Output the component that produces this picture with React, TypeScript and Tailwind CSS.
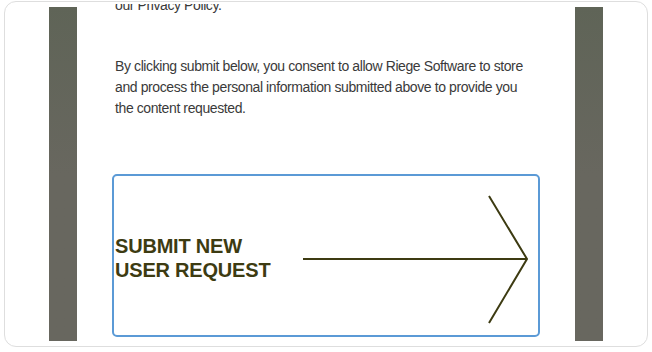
import React from "react";

function ArrowIcon() {
  return (
    <svg width="226" height="130" viewBox="0 0 226 130" className="shrink-0 mt-[5px]">
      <line x1="0" y1="64" x2="224" y2="64" stroke="#3d3b12" strokeWidth="2" />
      <polyline points="186,1 224,64 186,128" fill="none" stroke="#3d3b12" strokeWidth="2" />
    </svg>
  );
}

function SideBar() {
  return <div className="mt-[3px] w-[28px] h-[334px] bg-gradient-to-b from-[#5f6457] via-[#68675f] to-[#68675f]" />;
}

export default function App() {
  return (
    <div className="w-[652px] h-[352px] bg-white pt-px pl-1 font-['Liberation_Sans',Arial,sans-serif]">
      <div className="w-[644px] h-[346px] border border-[#dedede] rounded-xl overflow-hidden">
        <div className="flex pl-[44px] pt-[2px]">
          <SideBar />
          <div className="w-[498px] h-[337px] overflow-hidden">
            <div className="-mt-[9px] text-[14px] leading-[21px] text-[#3a3a3a] tracking-[-0.4px]">
              <p className="pl-[38px]">our Privacy Policy.</p>
              <p className="pl-[38px] mt-[40px]">
                By clicking submit below, you consent to allow Riege Software to store
                <br />
                and process the personal information submitted above to provide you
                <br />
                the content requested.
              </p>
              <div className="ml-[35px] mt-[55px] w-[428px] h-[163px] border-2 border-[#5b9ad6] rounded-[5px] flex items-center pt-[4px] pl-px tracking-normal">
                <div className="w-[188px] text-[20px] leading-[24px] font-bold text-[#3d3b12] tracking-[-0.2px]">
                  SUBMIT NEW
                  <br />
                  USER REQUEST
                </div>
                <ArrowIcon />
              </div>
            </div>
          </div>
          <SideBar />
        </div>
      </div>
    </div>
  );
}
